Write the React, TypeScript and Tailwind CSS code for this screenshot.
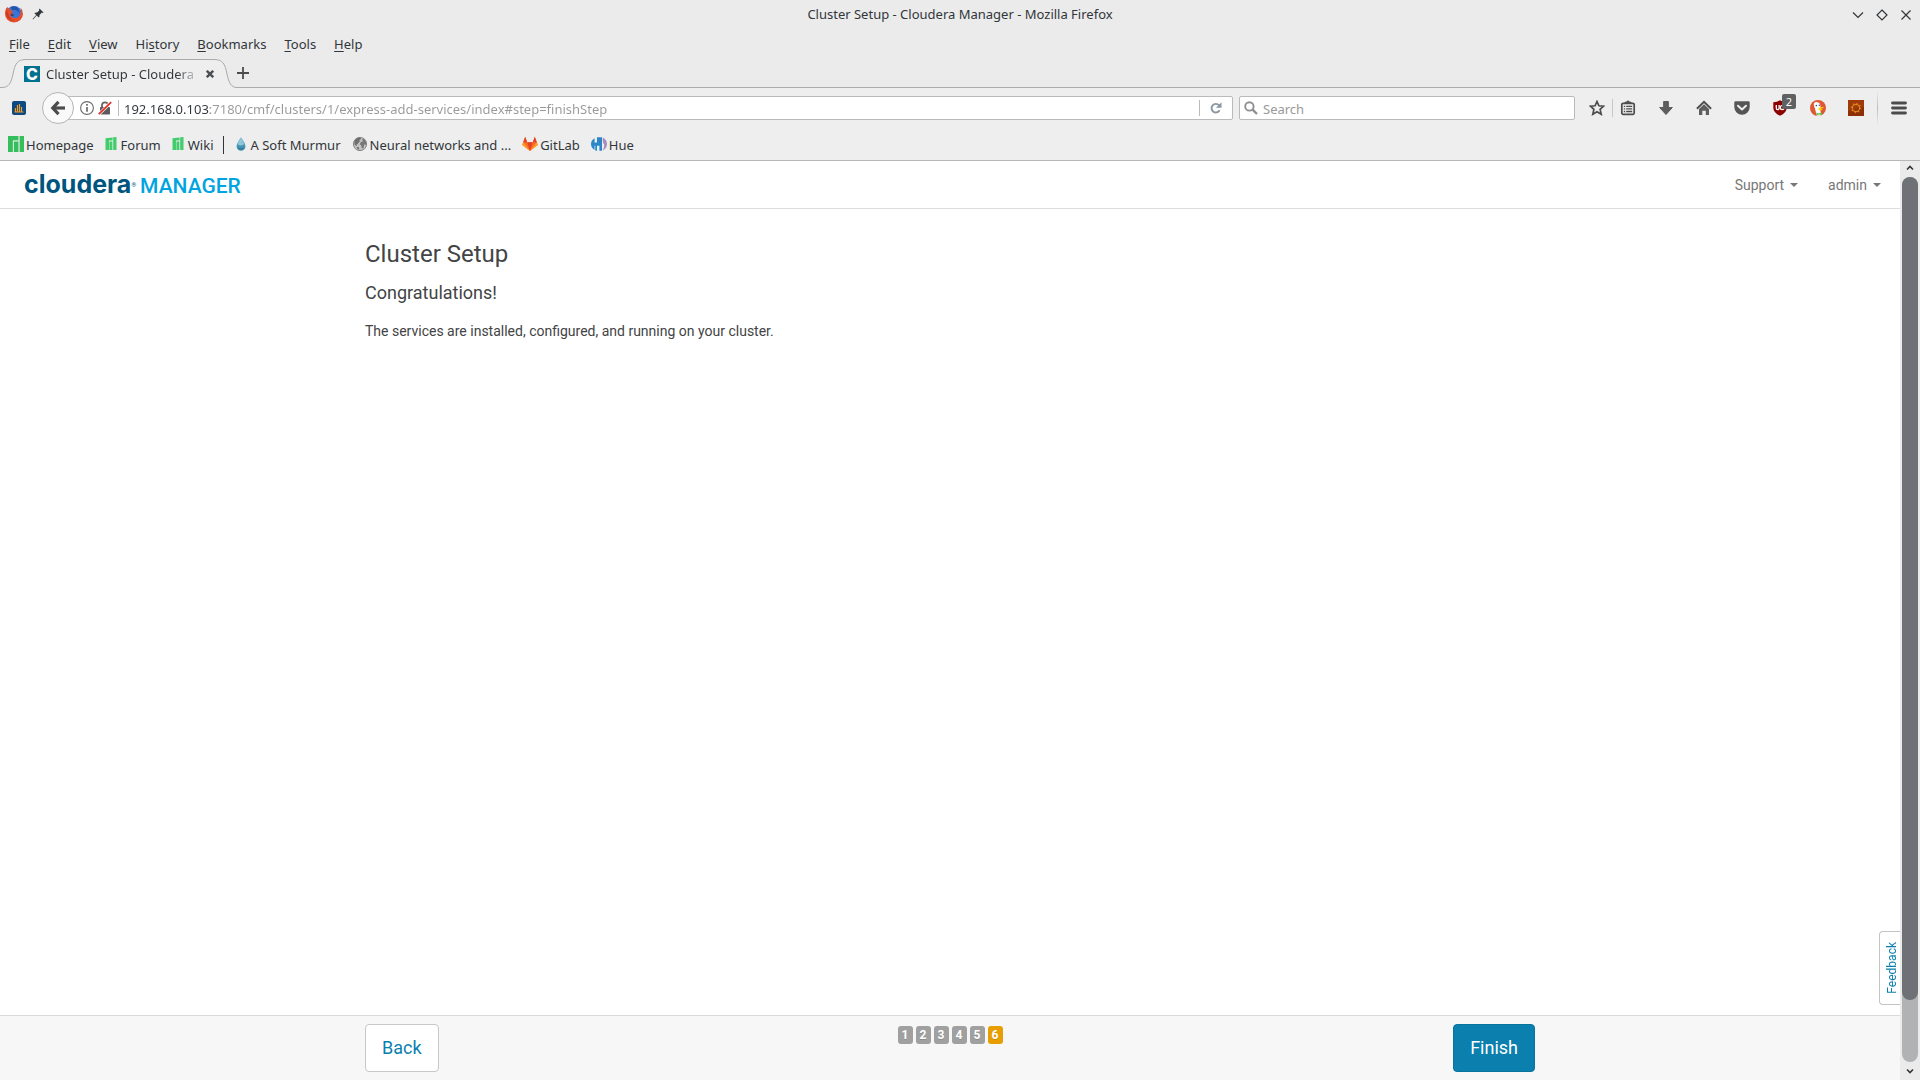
import { useState } from "react";
import type { ReactNode } from "react";

// ========================
// DATA
// ========================
const menus = [
  { before: "", key: "F", after: "ile" },
  { before: "", key: "E", after: "dit" },
  { before: "", key: "V", after: "iew" },
  { before: "Hi", key: "s", after: "tory" },
  { before: "", key: "B", after: "ookmarks" },
  { before: "", key: "T", after: "ools" },
  { before: "", key: "H", after: "elp" },
];

const steps = [1, 2, 3, 4, 5, 6];
const currentStep = 6;

// ========================
// ICONS
// ========================
const FirefoxIcon = () => (
  <svg width="20" height="20" viewBox="0 0 20 20">
    <circle cx="10" cy="10" r="8" fill="#3b74d8" />
    <path d="M7 3 Q11 1 14 4 L16 9 L12 6 L8 6Z" fill="#2456a8" />
    <path
      d="M2 4.5 Q1 7 1 10 A9 8.5 0 0 0 19 10 Q19 6 16.5 3.5 Q17.5 6 16.5 9 Q15.5 14 11 14 Q7.5 14 6.5 11.5 Q8 12.5 10 11.5 Q10.5 10.5 8.5 10 Q7.5 8.5 9 7.5 Q7 7 6 5 Q4 4.5 3.5 3Z"
      fill="#e5502a"
    />
    <path d="M2 6 Q1.5 11 4 14 Q7 17.5 11 17 Q5 15 4 9Z" fill="#c93b25" />
    <path d="M6.5 11.5 Q8 12.5 10 11.5 Q10.5 10.5 8.5 10 L7 9.5Z" fill="#26477f" />
  </svg>
);

const PinIcon = () => (
  <svg width="12" height="12" viewBox="0 0 12 12" fill="#31363b">
    <path d="M7.5 0.5 L11.5 4.5 L10.5 5 L9.8 4.6 L7.5 6.9 Q7.8 8.5 6.8 9.6 L4.7 7.6 L1 11.4 L0.6 11 L4.2 7.1 L2.4 5.2 Q3.5 4.2 5.1 4.5 L7.4 2.2 L7 1.4Z" />
  </svg>
);

const ChartIcon = () => (
  <svg width="14" height="14" viewBox="0 0 14 14">
    <rect width="14" height="14" rx="2" fill="#0d4a82" />
    <path d="M3.5 11V7M5.5 11V4M7.5 11V3M9.5 11V6" stroke="#f39a21" strokeWidth="1.2" />
    <path d="M2.5 11h9" stroke="#f39a21" />
  </svg>
);

const BackIcon = () => (
  <svg width="16" height="16" viewBox="0 0 16 16" fill="none" stroke="#4c4c4c" strokeWidth="3.2">
    <path d="M8.5 1.8 L2.8 8 L8.5 14.2" />
    <path d="M3 8h12" />
  </svg>
);

const InfoIcon = () => (
  <svg width="14" height="14" viewBox="0 0 14 14">
    <circle cx="7" cy="7" r="6.4" fill="none" stroke="#6a6a6a" strokeWidth="1.1" />
    <path d="M7 3v1.8M7 6v4.8" stroke="#6a6a6a" strokeWidth="1.7" />
  </svg>
);

const InsecureIcon = () => (
  <svg width="14" height="14" viewBox="0 0 14 14">
    <path d="M4 6.5V4.3a3 3 0 0 1 6 0v2.2" fill="none" stroke="#666" strokeWidth="1.8" />
    <rect x="2" y="6" width="10" height="7.5" rx="0.8" fill="#5c5c5c" />
    <path d="M0.8 13.2 L13.2 1.2" stroke="#fff" strokeWidth="3" />
    <path d="M0.8 13.2 L13.2 1.2" stroke="#e02b20" strokeWidth="1.7" />
  </svg>
);

const ReloadIcon = () => (
  <svg width="12" height="12" viewBox="0 0 12 12">
    <path d="M9.6 8.3A4.3 4.3 0 1 1 9 3.2" fill="none" stroke="#8996a3" strokeWidth="1.9" />
    <path d="M11.5 0.2v5.6H5.9Z" fill="#8996a3" />
  </svg>
);

const SearchIcon = () => (
  <svg width="14" height="14" viewBox="0 0 14 14" fill="none" stroke="#8f8f8f">
    <circle cx="5.4" cy="5.4" r="4.2" strokeWidth="1.9" />
    <path d="M8.6 8.6 L13 13" strokeWidth="2.4" />
  </svg>
);

const StarIcon = () => (
  <svg width="16" height="16" viewBox="0 0 16 16">
    <path
      d="M8 1.5 L9.9 5.8 L14.6 6.2 L11.1 9.4 L12.2 14.2 L8 11.7 L3.8 14.2 L4.9 9.4 L1.4 6.2 L6.1 5.8Z"
      fill="none"
      stroke="#4c4c4c"
      strokeWidth="1.7"
    />
  </svg>
);

const ListIcon = () => (
  <svg width="16" height="16" viewBox="0 0 16 16">
    <rect x="1.8" y="3.3" width="12.4" height="11" rx="1.3" fill="none" stroke="#4c4c4c" strokeWidth="1.7" />
    <path d="M5 3.5V2.2h1.4a1.7 1.7 0 0 1 3.2 0H11v1.3Z" fill="#4c4c4c" stroke="#4c4c4c" />
    <path d="M3.8 6.3h1.4M6.2 6.3h6M3.8 8.9h1.4M6.2 8.9h6M3.8 11.5h1.4M6.2 11.5h6" stroke="#4c4c4c" strokeWidth="1.3" />
  </svg>
);

const DownloadIcon = () => (
  <svg width="16" height="16" viewBox="0 0 16 16">
    <path d="M5.6 1.5h4.8v6h4L8 14.6 1.6 7.5h4Z" fill="#5e5e5e" stroke="#4c4c4c" strokeWidth="0.8" />
  </svg>
);

const HomeIcon = () => (
  <svg width="16" height="16" viewBox="0 0 16 16">
    <path d="M0.9 8.7 L8 1.9 L15.1 8.7" fill="none" stroke="#4c4c4c" strokeWidth="1.9" />
    <path d="M3 8.9 L8 4.3 L13 8.9V15H9.8v-4.3H6.3V15H3Z" fill="#5e5e5e" />
  </svg>
);

const PocketIcon = () => (
  <svg width="16" height="16" viewBox="0 0 16 16">
    <path d="M1.5 1.2h13a1.2 1.2 0 0 1 1.2 1.2V7a7.7 7.7 0 0 1-15.4 0V2.4A1.2 1.2 0 0 1 1.5 1.2Z" fill="#555" />
    <path d="M4 5.7 L8 9.4 L12 5.7" fill="none" stroke="#eee" strokeWidth="2" strokeLinecap="round" strokeLinejoin="round" />
  </svg>
);

const ShieldIcon = () => (
  <svg width="16" height="16" viewBox="0 0 16 16">
    <path d="M8 0.3 Q11 2.2 14.7 2.3 V8 Q14.5 13 8 15.8 Q1.5 13 1.3 8 V2.3 Q5 2.2 8 0.3Z" fill="#8c0000" />
    <path d="M4.3 5v3.3a1.4 1.4 0 0 0 2.8 0V5" fill="none" stroke="#fff" strokeWidth="1.3" />
    <circle cx="10.2" cy="7.6" r="2" fill="none" stroke="#fff" strokeWidth="1.3" />
  </svg>
);

const DuckIcon = () => (
  <svg width="16" height="16" viewBox="0 0 16 16">
    <circle cx="8" cy="8" r="8" fill="#de5833" />
    <path d="M4 3.5 Q5 1.5 7.5 2.2 Q10.6 2.8 10.4 6.5 L10.2 9.5 L11.3 15.2 Q8.5 16.2 6.6 15.5 L5 8.5 Q3.3 5 4 3.5Z" fill="#fff" />
    <circle cx="6.3" cy="5.6" r="0.8" fill="#2d4f8e" />
    <circle cx="9.3" cy="5.2" r="0.7" fill="#2d4f8e" />
    <path d="M8.4 8.2 Q11 6.8 14 7.2 Q13 8.6 10.5 8.8 Q12 9.6 13 9.7 Q10.5 10.9 8.4 9.8Z" fill="#fdd20a" />
    <path d="M6.4 12.6 L9 13.4 L11.7 12.3 L12 15 L8.8 14.6 L6.5 15.2Z" fill="#65bc46" />
  </svg>
);

const GearTileIcon = () => (
  <svg width="16" height="16" viewBox="0 0 16 16">
    <rect width="16" height="16" fill="#8f2f06" />
    <path d="M0 0h16v7L0 11Z" fill="#a03a0a" />
    <circle cx="8" cy="8" r="3.6" fill="none" stroke="#d98a1c" strokeWidth="1.1" />
    <circle cx="8" cy="8" r="4.6" fill="none" stroke="#d98a1c" strokeWidth="1.2" strokeDasharray="1.2 2.4" />
  </svg>
);

const MenuIcon = () => (
  <svg width="16" height="14" viewBox="0 0 16 14">
    <path d="M1.5 2h13M1.5 7h13M1.5 12h13" stroke="#4c4c4c" strokeWidth="2.8" strokeLinecap="round" />
  </svg>
);

const ManjaroIcon = () => (
  <svg width="16" height="16" viewBox="0 0 16 16">
    <path d="M0 0h10.7v4.4H5v11.6H0ZM5.7 5.2h5V16h-5ZM11.4 0H16v16h-4.6Z" fill="#35bf5c" />
    <path d="M5.3 16V5h5.4M11 0v16" stroke="#eee" strokeWidth="0.7" fill="none" />
  </svg>
);

const ManjaroSmallIcon = () => (
  <svg width="16" height="16" viewBox="0 0 16 16">
    <path d="M2.5 2.2 L9.6 1.4V4.6H6V14H2.5ZM6.4 5.4H9.4V14H6.4ZM10.2 1.3L13.5 1V14H10.2Z" fill="#43cc6c" />
  </svg>
);

const DropIcon = () => (
  <svg width="16" height="16" viewBox="0 0 16 16">
    <path d="M8 1.6 Q12.6 7.8 12.4 10.4 A4.4 4.4 0 0 1 3.6 10.4 Q3.4 7.8 8 1.6Z" fill="#4793b3" />
    <path d="M8 1.6 Q11 6 11.4 8.3 Q8 10.5 4.2 8.3 Q5 5.6 8 1.6Z" fill="#8fc6da" />
    <path d="M4.6 11.5 A4 4 0 0 0 11.4 11.5 Q8 13.3 4.6 11.5Z" fill="#23698c" />
  </svg>
);

const GlobeIcon = () => (
  <svg width="16" height="16" viewBox="0 0 16 16">
    <circle cx="8" cy="8" r="6.6" fill="#c4c4c4" stroke="#858585" strokeWidth="1" />
    <path d="M2.3 5.5 Q4 1.8 8 1.6 L9.2 3 L7.4 4.3 L7.8 5.8 L5.8 7.2 L6.5 8.2 L4.6 8 L5 10 L2.6 9Z" fill="#6f6f6f" />
    <path d="M10 3.2 L12.3 3 L14 6 L14.3 9 L12.4 8.2 L11.3 12.5 L9.6 12 L9.3 9.5 L7.7 8.2 L9 5.8 L11 5.6Z" fill="#777" />
    <path d="M4.4 11.2 L6.5 10.8 L7.6 13.6 L5.6 13.3Z" fill="#777" />
  </svg>
);

const GitLabIcon = () => (
  <svg width="16" height="16" viewBox="0 0 16 16">
    <path d="M8 15 L0.2 9 L1.2 6 L3.2 0.8 L5.2 6.2h5.6L12.8 0.8 L14.8 6 L15.8 9Z" fill="#fc6d26" />
    <path d="M8 15 L5.2 6.2h5.6Z" fill="#e24329" />
    <path d="M1.2 6.2 L3.2 0.8 L5.2 6.2ZM10.8 6.2 L12.8 0.8 L14.8 6.2Z" fill="#e24329" />
    <path d="M1.2 6.2 L0.2 9 L8 15ZM14.8 6.2 L15.8 9 L8 15Z" fill="#fca326" />
  </svg>
);

const HueIcon = () => (
  <svg width="16" height="16" viewBox="0 0 16 16">
    <path d="M4 2 V6.4 H6 V1.2 H11 V14.8 H8.4 V9.8 H6 V14.8 H4.8 L4 14 Q0 12 0 8 Q0 4.2 4 2Z" fill="#2b87c8" />
    <path d="M3.9 1.5v5.2M3.9 9.6v5" stroke="#eee" strokeWidth="0.7" />
    <path d="M11.8 1.6 Q16 3.7 16 8 Q16 12.3 11.8 14.4 Q13.6 11 13.2 8.6 Q11.4 7 11.8 1.6Z" fill="#a98bc4" />
  </svg>
);

const Caret = () => (
  <svg width="8" height="4" viewBox="0 0 8 4">
    <path d="M0 0h8L4 4Z" fill="#777" />
  </svg>
);

const distroBookmarks: { label: string; icon: ReactNode }[] = [
  { label: "Homepage", icon: <ManjaroIcon /> },
  { label: "Forum", icon: <ManjaroSmallIcon /> },
  { label: "Wiki", icon: <ManjaroSmallIcon /> },
];

const ownBookmarks: { label: string; icon: ReactNode }[] = [
  { label: "A Soft Murmur", icon: <DropIcon /> },
  { label: "Neural networks and ...", icon: <GlobeIcon /> },
  { label: "GitLab", icon: <GitLabIcon /> },
  { label: "Hue", icon: <HueIcon /> },
];

const Bookmark = ({ label, icon }: { label: string; icon: ReactNode }) => (
  <a href="#" className="flex items-start gap-0.5 leading-[18px] whitespace-nowrap">
    {icon}
    {label}
  </a>
);

// ========================
// BROWSER CHROME
// ========================
const TitleBar = () => (
  <div className="grid h-[29px] grid-cols-[1fr_auto_1fr] items-center px-1">
    <div className="flex items-center gap-2 pb-0.5">
      <FirefoxIcon />
      <PinIcon />
    </div>
    <span>Cluster Setup - Cloudera Manager - Mozilla Firefox</span>
    <div className="flex items-center justify-end gap-3 pr-1">
      <button aria-label="Minimize">
        <svg width="12" height="12" viewBox="0 0 12 12" fill="none" stroke="#31363b" strokeWidth="1.2">
          <path d="M1 3.5 L6 8.5 L11 3.5" />
        </svg>
      </button>
      <button aria-label="Maximize">
        <svg width="12" height="12" viewBox="0 0 12 12" fill="none" stroke="#31363b" strokeWidth="1.2">
          <path d="M6 1 L11 6 L6 11 L1 6Z" />
        </svg>
      </button>
      <button aria-label="Close">
        <svg width="12" height="12" viewBox="0 0 12 12" fill="none" stroke="#31363b" strokeWidth="1.2">
          <path d="M1.5 1.5 L10.5 10.5M10.5 1.5 L1.5 10.5" />
        </svg>
      </button>
    </div>
  </div>
);

const TabStrip = () => (
  <div className="flex h-[29px] items-center">
    <div className="relative flex h-full w-[237px] items-center pl-6">
      <svg className="absolute top-0 left-0" width="237" height="29" viewBox="0 0 237 29">
        <path
          d="M0 28.5 H2 C9 28.5 11 24 13 15 C15 5 17 0.5 26 0.5 H214 C223 0.5 225 5 227 15 C229 24 231 28.5 237 28.5 V29 H0Z"
          fill="#eeeeee"
        />
        <path
          d="M0 28.5 H2 C9 28.5 11 24 13 15 C15 5 17 0.5 26 0.5 H214 C223 0.5 225 5 227 15 C229 24 231 28.5 237 28.5"
          fill="none"
          stroke="#a9abad"
        />
      </svg>
      <div className="relative flex items-center">
        <span className="flex size-4 items-center justify-center bg-[#00718f] font-['Inter',sans-serif] text-base leading-4 font-extrabold text-white">
          C
        </span>
        <span className="ml-1.5 w-[154px] overflow-hidden bg-linear-to-r from-[#31363b] from-85% to-transparent bg-clip-text pt-0.5 whitespace-nowrap text-transparent">
          Cluster Setup - Cloudera
        </span>
        <button aria-label="Close tab" className="ml-1.5">
          <svg width="8" height="8" viewBox="0 0 8 8" stroke="#4a4e52" strokeWidth="2.4">
            <path d="M0.8 0.8 L7.2 7.2M7.2 0.8 L0.8 7.2" />
          </svg>
        </button>
      </div>
    </div>
    <div className="flex h-full flex-1 items-center border-b border-[#a9abad]">
      <button aria-label="New tab">
        <svg width="12" height="12" viewBox="0 0 12 12" stroke="#4c4c4c" strokeWidth="1.8">
          <path d="M6 0v12M0 6h12" />
        </svg>
      </button>
    </div>
  </div>
);

const Toolbar = () => {
  const [url, setUrl] = useState("192.168.0.103:7180/cmf/clusters/1/express-add-services/index#step=finishStep");
  const [search, setSearch] = useState("");

  return (
    <div className="flex h-10 items-center bg-[#eeeeee]">
      <button aria-label="Statistics" className="ml-3 flex w-[30px]">
        <ChartIcon />
      </button>
      <button
        aria-label="Back"
        className="z-10 flex size-8 items-center justify-center rounded-full border border-[#b5b5b5] bg-[#f9f9f9]"
      >
        <BackIcon />
      </button>
      <div className="-ml-2 flex h-6 flex-1 items-center rounded-xs border border-[#b9bbbb] bg-white pl-[13px]">
        <InfoIcon />
        <span className="ml-1 flex">
          <InsecureIcon />
        </span>
        <span className="ml-1.5 h-4 w-px bg-[#bbbbbb]" />
        {/* host is dark, the rest of the address is grey */}
        <input
          aria-label="Address"
          value={url}
          onChange={(e) => setUrl(e.target.value)}
          className="h-full flex-1 bg-[linear-gradient(to_right,#31363b_91px,#999999_91px)] bg-clip-text pt-0.5 pl-[5px] text-transparent outline-none"
        />
        <span className="h-4 w-px bg-[#bbbbbb]" />
        <button aria-label="Reload" className="flex w-8 justify-center">
          <ReloadIcon />
        </button>
      </div>
      <label className="ml-1.5 flex h-6 w-[336px] items-center gap-[5px] rounded-xs border border-[#b9bbbb] bg-white px-1">
        <SearchIcon />
        <input
          aria-label="Search"
          placeholder="Search"
          value={search}
          onChange={(e) => setSearch(e.target.value)}
          className="h-full flex-1 pt-0.5 outline-none placeholder:text-[#999999]"
        />
      </label>
      <button aria-label="Bookmark this page" className="ml-[7px] flex w-[30px] justify-center">
        <StarIcon />
      </button>
      <span className="h-[18px] w-px bg-[#c8c8c8]" />
      <button aria-label="Show bookmarks" className="flex w-[34px] justify-center pr-1">
        <ListIcon />
      </button>
      <button aria-label="Downloads" className="flex w-[38px] justify-center">
        <DownloadIcon />
      </button>
      <button aria-label="Home" className="flex w-[38px] justify-center">
        <HomeIcon />
      </button>
      <button aria-label="Pocket" className="flex w-[38px] justify-center">
        <PocketIcon />
      </button>
      <button aria-label="uBlock" className="relative flex w-[38px] justify-center">
        <ShieldIcon />
        <span className="absolute -top-1.5 right-[3px] h-[15px] w-[14px] rounded-xs bg-[#5f6163] text-center text-[11px] leading-[15px] text-white">
          2
        </span>
      </button>
      <button aria-label="DuckDuckGo" className="flex w-[38px] justify-center">
        <DuckIcon />
      </button>
      <button aria-label="Settings" className="flex w-[38px] justify-center">
        <GearTileIcon />
      </button>
      <span className="ml-0.5 h-9 w-px bg-linear-to-b from-transparent via-[#bcbcbc] to-transparent" />
      <button aria-label="Menu" className="flex w-[42px] justify-center">
        <MenuIcon />
      </button>
    </div>
  );
};

const ScrollBar = () => (
  <div className="flex w-5 flex-col items-center bg-[#ebebeb]">
    <svg className="mt-[3px] mb-[5px]" width="8" height="8" viewBox="0 0 8 8" fill="none" stroke="#31363b" strokeWidth="1.6">
      <path d="M1 5.5 L4 2.5 L7 5.5" />
    </svg>
    <div className="flex w-4 flex-1 flex-col rounded-full bg-[#b1b2b3]">
      <div className="h-[93%] rounded-full bg-[#6e7175]" />
    </div>
    <svg className="mt-[5px] mb-[5px]" width="8" height="8" viewBox="0 0 8 8" fill="none" stroke="#31363b" strokeWidth="1.6">
      <path d="M1 2.5 L4 5.5 L7 2.5" />
    </svg>
  </div>
);

// ========================
// PAGE
// ========================
const App = () => {
  return (
    <div className="flex h-screen flex-col bg-[#ebebeb] font-['Noto_Sans',sans-serif] text-[13px] text-[#31363b]">
      <TitleBar />

      <nav className="flex h-[30px] items-center gap-[18px] pt-0.5 pl-[9px]">
        {menus.map((menu) => (
          <button key={menu.key + menu.after}>
            {menu.before}
            <span className="underline underline-offset-2">{menu.key}</span>
            {menu.after}
          </button>
        ))}
      </nav>

      <TabStrip />
      <Toolbar />

      {/* BOOKMARKS */}
      <div className="flex h-[33px] items-center gap-[9px] border-b border-[#b5b7b8] bg-[#eeeeee] pt-0.5 pl-2">
        {distroBookmarks.map((item) => (
          <Bookmark key={item.label} {...item} />
        ))}
        <span className="h-[18px] w-px bg-[#31363b]" />
        <div className="flex gap-[11px]">
          {ownBookmarks.map((item) => (
            <Bookmark key={item.label} {...item} />
          ))}
        </div>
      </div>

      <div className="flex min-h-0 flex-1">
        <div className="relative flex flex-1 flex-col bg-white font-['Roboto',sans-serif] text-sm text-[#424445]">
          {/* HEADER */}
          <header className="flex h-12 items-center justify-between border-b border-[#dddddd] pr-[19px] pl-6">
            <a href="#" className="flex items-baseline leading-6">
              <span className="font-['Inter',sans-serif] text-[25px] font-bold text-[#00557f]">cloudera</span>
              <span className="self-center text-[6px] text-[#00557f]">®</span>
              <span className="ml-1 text-[21px] font-medium text-[#00a4e0]">MANAGER</span>
            </a>
            <div className="flex gap-[30px] text-[#777777]">
              <button className="flex items-center gap-1.5">
                Support <Caret />
              </button>
              <button className="flex items-center gap-1.5">
                admin <Caret />
              </button>
            </div>
          </header>

          {/* CONTENT */}
          <main className="mx-auto w-full max-w-[1170px] flex-1 pt-7">
            <h1 className="text-2xl leading-[34px]">Cluster Setup</h1>
            <h2 className="mt-2.5 text-lg leading-6">Congratulations!</h2>
            <p className="mt-4 leading-5">The services are installed, configured, and running on your cluster.</p>
          </main>

          {/* WIZARD FOOTER */}
          <footer className="h-[65px] border-t border-[#d9d9d9] bg-[#f7f7f7] pt-2">
            <div className="mx-auto grid w-full max-w-[1170px] grid-cols-[1fr_auto_1fr] items-start">
              <button className="h-12 justify-self-start rounded-[4px] border border-[#c8c8c8] bg-white px-4 text-lg text-[#0b7fad]">
                Back
              </button>
              <ol className="flex gap-[3px] pt-0.5">
                {steps.map((step) => (
                  <li
                    key={step}
                    className={`h-[18px] w-[15px] rounded-[3px] text-center text-xs leading-[18px] font-bold text-white text-shadow-2xs ${
                      step === currentStep ? "bg-[#e89e00]" : "bg-[#a0a0a0]"
                    }`}
                  >
                    {step}
                  </li>
                ))}
              </ol>
              <button className="h-12 justify-self-end rounded-[4px] border border-[#0a739e] bg-[#0b7fad] px-4 text-lg text-white">
                Finish
              </button>
            </div>
          </footer>

          <button className="absolute right-0 bottom-[75px] flex h-[74px] w-[21px] items-center justify-center rounded-l-[4px] border border-r-0 border-[#c4c4c4] bg-white pl-[3px] text-xs text-[#0b7fad]">
            <span className="rotate-180 [writing-mode:vertical-rl]">Feedback</span>
          </button>
        </div>

        <ScrollBar />
      </div>
    </div>
  );
};

export default App;
